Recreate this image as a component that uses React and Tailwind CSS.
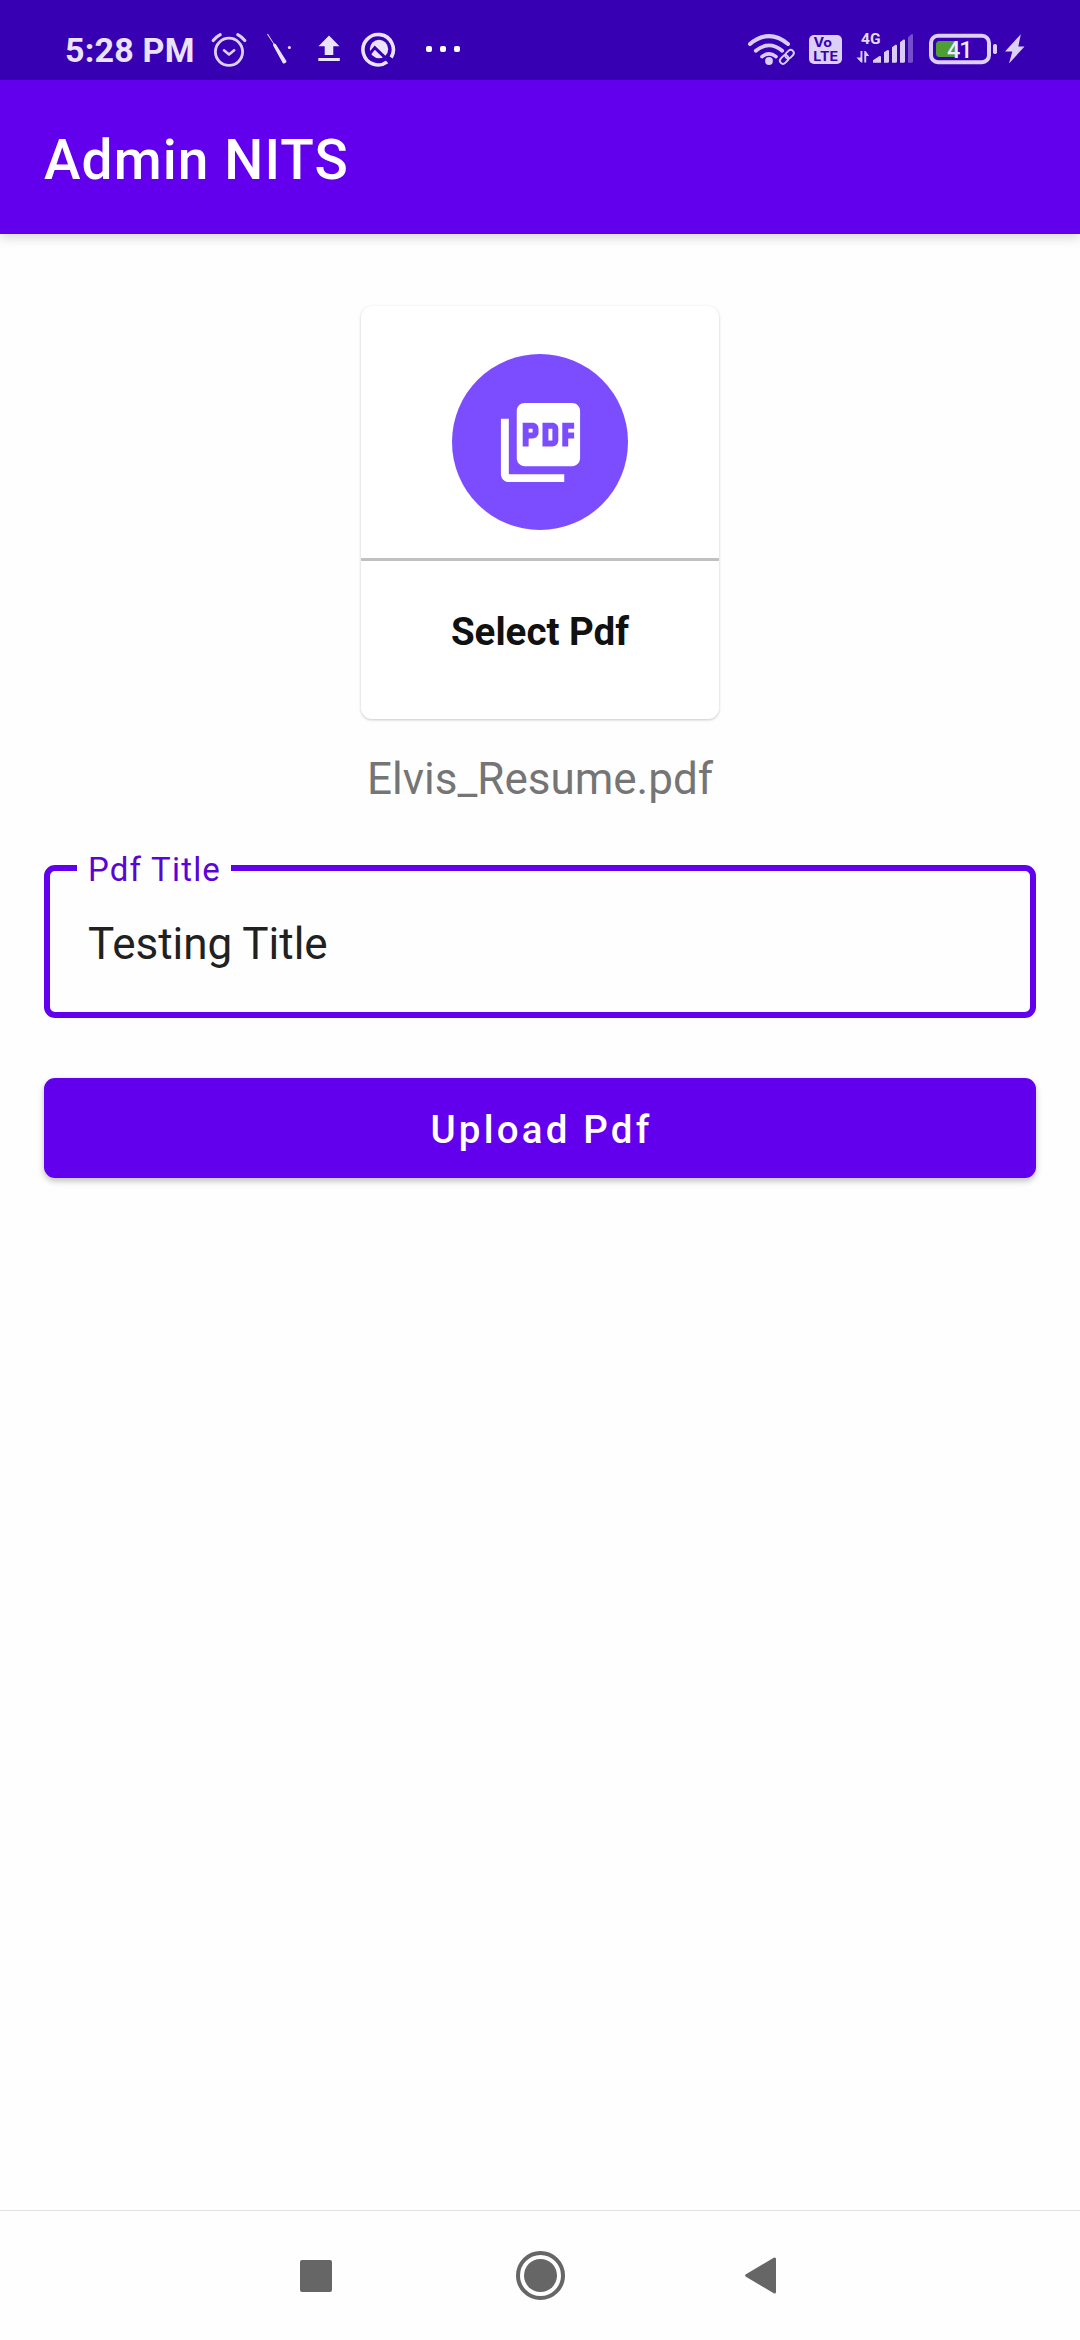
import React from "react";
import { MdPictureAsPdf } from "react-icons/md";

function AlarmIcon() {
  return (
    <svg className="block h-[40px] w-[40px]" viewBox="209 30 40 40" fill="none" stroke="#ddd0f6" strokeLinecap="round" strokeLinejoin="round">
      <circle cx="229" cy="51.8" r="13.6" strokeWidth="2.8" />
      <path d="M224 50.3l5 4.2 5.2-4.2" strokeWidth="2.6" />
      <path d="M213.200 40.500q3-3.600 7-5.800M244.800 40.500q-3-3.600-7-5.800" strokeWidth="3.2" />
    </svg>
  );
}

function StylusIcon() {
  return (
    <svg className="block h-[34px] w-[28px]" viewBox="265 32 28 34" fill="#ebe3fa">
      <path d="M267 34.200l.9-.4 6 9.400 1.800.7 10.700 17.100q.3 1.100-.7 1.700l-1.400.7q-1 .2-1.600-.5l-9.700-17.600.2-1.900z" />
      <circle cx="289.400" cy="47.500" r="1.500" />
    </svg>
  );
}

function UploadIcon() {
  return (
    <svg className="block h-[28px] w-[24px]" viewBox="317 34 24 28" fill="#ebe3fa">
      <path d="M329 35.500l10.500 10.800h-6.200v8.700h-8.600v-8.700h-6.200zM318.300 58h21.500v3h-21.500z" />
    </svg>
  );
}

function BadgeIcon() {
  return (
    <svg className="block h-[36px] w-[36px]" viewBox="361 31 36 36" fill="none">
      <path d="M387.200 61.900A15.200 15.200 0 1 1 391.200 57.500" stroke="#ebe3fa" strokeWidth="3.600" />
      <circle cx="379" cy="49" r="9.200" fill="#ebe3fa" />
      <path d="M369 54.600l5.800-7 15 14.500" stroke="#3700b3" strokeWidth="3" />
    </svg>
  );
}

function WifiIcon() {
  return (
    <svg className="block h-[36px] w-[50px]" viewBox="747 31 50 36" fill="none" stroke="#d9cdf4">
      <path d="M750 44Q769 28.300 788 44" strokeWidth="4" strokeLinecap="round" />
      <path d="M755.800 50.800Q769 40 782.200 50.800" strokeWidth="3.800" strokeLinecap="round" />
      <path d="M762 56.700Q769 51 776 56.700" strokeWidth="3.600" strokeLinecap="round" />
      <circle cx="769" cy="61" r="3.900" fill="#d9cdf4" stroke="none" />
      <g transform="rotate(-45 787 57)" stroke="#3700b3" strokeWidth="5">
        <rect x="778.500" y="53.700" width="9.500" height="6.200" rx="3.100" />
        <rect x="786" y="53.700" width="9.500" height="6.200" rx="3.100" />
      </g>
      <g transform="rotate(-45 787 57)" strokeWidth="1.900">
        <rect x="778.500" y="53.700" width="9.500" height="6.200" rx="3.100" />
        <rect x="786" y="53.700" width="9.500" height="6.200" rx="3.100" />
      </g>
    </svg>
  );
}

function VolteIcon() {
  return (
    <svg className="block h-[29px] w-[33px] font-['Inter']" viewBox="809 35 33 29">
      <rect x="809" y="35" width="33" height="29" rx="5" fill="#ddd0f6" />
      <text x="813.500" y="47" fontSize="12.500" fontWeight="700" fill="#3700b3" textLength="18.500" lengthAdjust="spacingAndGlyphs">Vo</text>
      <text x="813.300" y="60.500" fontSize="13" fontWeight="700" fill="#3700b3" textLength="25" lengthAdjust="spacingAndGlyphs">LTE</text>
    </svg>
  );
}

function SignalIcon() {
  return (
    <svg className="block h-[36px] w-[58px] font-['Roboto']" viewBox="856 30 58 36">
      <text x="861" y="44" fontSize="15.500" fontWeight="700" fill="#e4daf8" textLength="19.500">4G</text>
      <g fill="#d9cdf4">
        <path d="M860.500 51h1.900v11.500h-1.300l-4.600-5h4zM864.300 62.500v-11.500h1.300l3.600 5h-3v6.500z" />
        <path d="M873 62.700v-2.400l6.500-4.200q1.500-.5 1.500 1v5.600zM884 62.700v-10.500l3.500-2.200q1.500-.4 1.500 1v10.700l-.8 1zM892 62.700v-15.500l3.500-2.400q1.500-.4 1.500 1v15.900l-.8 1zM900 62.700v-20.500l3.500-2.700q1.500-.4 1.500 1v21.200l-.8 1z" />
        <path d="M908 62.700v-25.500l3.500-3q1.500-.4 1.500 1v26.500l-.8 1z" opacity=".38" />
      </g>
    </svg>
  );
}

function BatteryIcon() {
  return (
    <svg className="block h-[32px] w-[69px] font-['Roboto']" viewBox="928 33 69 32">
      <rect x="931" y="35.800" width="58" height="26.400" rx="7" fill="none" stroke="#ddd0f6" strokeWidth="4" />
      <path d="M939.500 41H956v16h-16.500q-3.500 0-3.500-3.500v-9q0-3.500 3.500-3.500z" fill="#4f9e35" />
      <rect x="993" y="44" width="4" height="10" rx="1.800" fill="#ddd0f6" />
      <text x="947" y="58" fontSize="23.500" fontWeight="500" fill="#f0eafc" textLength="25.500">41</text>
    </svg>
  );
}

function BoltIcon() {
  return (
    <svg className="block h-[30px] w-[20px]" viewBox="1005 34 20 30" fill="#ddd0f6">
      <path d="M1020.800 34.300l-15.800 17.200h7.300l-3.300 12 15.500-17h-6.200z" />
    </svg>
  );
}

function StatusBar() {
  return (
    <div className="flex h-[80px] items-start justify-between bg-[#3700b3] pl-[65px] pr-[55px]">
      <div className="flex items-start">
        <span className="mt-[30px] w-[144px] whitespace-nowrap text-[34px] leading-[40px] font-bold tracking-[0.2px] text-[#ebe3fa]">5:28 PM</span>
        <div className="mt-[30px]"><AlarmIcon /></div>
        <div className="mt-[32px] ml-[16px]"><StylusIcon /></div>
        <div className="mt-[34px] ml-[24px]"><UploadIcon /></div>
        <div className="mt-[31px] ml-[20px]"><BadgeIcon /></div>
        <div className="mt-[46px] ml-[29px] flex gap-[8px]">
          <i className="size-[6px] rounded-[2px] bg-white" />
          <i className="size-[6px] rounded-[2px] bg-white" />
          <i className="size-[6px] rounded-[2px] bg-white" />
        </div>
      </div>
      <div className="flex items-start">
        <div className="mt-[31px]"><WifiIcon /></div>
        <div className="mt-[35px] ml-[12px]"><VolteIcon /></div>
        <div className="mt-[30px] ml-[14px]"><SignalIcon /></div>
        <div className="mt-[33px] ml-[14px]"><BatteryIcon /></div>
        <div className="mt-[34px] ml-[8px]"><BoltIcon /></div>
      </div>
    </div>
  );
}

function AppBar() {
  return (
    <header className="flex h-[154px] items-center bg-[#6200ee] px-[44px] pt-[6px] shadow-[0_4px_10px_rgba(0,0,0,0.15)]">
      <h1 className="text-[55px] leading-[64px] font-medium tracking-[1.1px] text-white">Admin NITS</h1>
    </header>
  );
}

function PdfCard() {
  return (
    <button className="flex h-[413px] w-[358px] flex-col items-center rounded-[11px] bg-white shadow-[0_1px_3px_rgba(0,0,0,0.22)]">
      <span className="mt-[48px] flex size-[176px] items-center justify-center rounded-full bg-[#7c4dff]">
        <MdPictureAsPdf className="size-[95px] text-white" />
      </span>
      <span className="mt-[28px] h-[3px] w-full bg-[#c0c0c0]" />
      <span className="mt-[48px] text-[38.5px] leading-[46px] font-bold text-[#111]">Select Pdf</span>
    </button>
  );
}

function TitleField() {
  return (
    <div className="relative mt-[60px] flex h-[153px] w-full items-center rounded-[11px] border-[6px] border-[#6200ee] pt-[5px] pl-[38px]">
      <label className="absolute top-[-21px] left-[27px] w-[154px] bg-[#fefefe] pl-[11px] whitespace-nowrap text-[33px] leading-[40px] tracking-[1.2px] text-[#5b04d6]">Pdf Title</label>
      <span className="text-[44px] leading-[52px] text-[#212121]">Testing Title</span>
    </div>
  );
}

function NavBar() {
  return (
    <nav className="flex h-[130px] items-center border-t border-[#e2e2e2] pl-[300px]">
      <span className="size-[32px] rounded-[2px] bg-[#666]" />
      <span className="ml-[184px] flex size-[49px] items-center justify-center rounded-full border-4 border-[#666]">
        <span className="size-[33px] rounded-full bg-[#666]" />
      </span>
      <svg className="ml-[180px] h-[37px] w-[31px]" viewBox="0 0 31 37" fill="#666" stroke="#666" strokeWidth="3" strokeLinejoin="round">
        <path d="M1.700 18.500L29.500 2v33z" />
      </svg>
    </nav>
  );
}

export default function App() {
  return (
    <div className="flex h-[2340px] w-[1080px] flex-col overflow-hidden bg-[#fefefe] font-['Roboto',sans-serif]">
      <StatusBar />
      <AppBar />
      <main className="flex flex-1 flex-col items-center px-[44px] pt-[72px]">
        <PdfCard />
        <p className="mt-[34px] text-[44px] leading-[52px] text-[#757575]">Elvis_Resume.pdf</p>
        <TitleField />
        <button className="mt-[60px] h-[100px] w-full rounded-[11px] bg-[#6200ee] pt-[4px] pl-[3px] text-[38.5px] font-medium tracking-[3.200px] text-white shadow-[0_3px_6px_rgba(0,0,0,0.25)]">Upload Pdf</button>
      </main>
      <NavBar />
    </div>
  );
}
